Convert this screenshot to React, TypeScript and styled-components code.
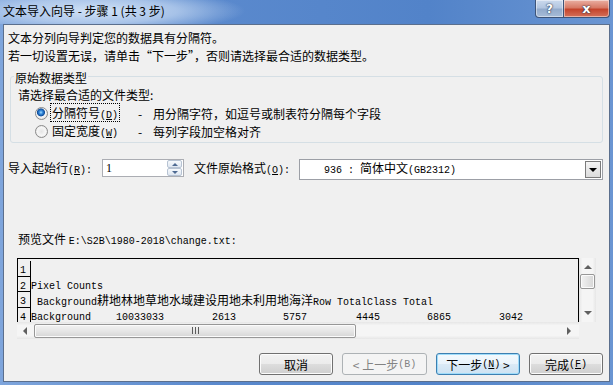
import React from "react";
import styled, { createGlobalStyle, css } from "styled-components";

const GlobalStyle = createGlobalStyle`
  html, body { margin: 0; padding: 0; }
  body {
    width: 613px;
    height: 385px;
    overflow: hidden;
    font-family: "Noto Sans CJK SC", "Liberation Sans", sans-serif;
    font-size: 12px;
    color: #000;
  }
  * { box-sizing: border-box; }
`;

const Window = styled.div`
  width: 613px;
  height: 385px;
  display: flex;
  flex-direction: column;
  background: linear-gradient(90deg, #7ea5dc 0%, #5a89cd 35%, #5283c9 70%, #6a95d2 100%);
  overflow: hidden;
`;

const TitleBar = styled.div`
  height: 24px;
  flex: none;
  display: flex;
  align-items: flex-start;
  justify-content: space-between;
  padding-left: 3px;
  background: radial-gradient(ellipse 150px 22px at 95px 11px, rgba(214, 230, 248, 0.95) 0%, rgba(196, 216, 242, 0.7) 55%, rgba(160, 192, 235, 0) 100%);
`;

const Caption = styled.div`
  line-height: 22px;
  font-size: 12px;
  color: #000;
`;

const CaptionButtons = styled.div`
  display: flex;
  margin-right: 3px;
`;

const CaptionButton = styled.div<{ $kind: "help" | "close" }>`
  height: 18px;
  display: flex;
  align-items: center;
  justify-content: center;
  border: 1px solid #3d5479;
  border-top: none;
  color: #fff;
  font-family: "DejaVu Sans", sans-serif;
  font-weight: bold;
  text-shadow: 0 0 2px #1d2d48, 0 0 1px #1d2d48;
  box-shadow: inset 0 0 0 1px rgba(255, 255, 255, 0.45);
  ${(p) =>
    p.$kind === "help"
      ? css`
          width: 29px;
          font-size: 12px;
          border-radius: 0 0 0 4px;
          background: linear-gradient(180deg, #cbdaee 0%, #b3c6e0 45%, #93abcc 55%, #a7bcd8 100%);
        `
      : css`
          width: 46px;
          font-size: 13px;
          border-left: none;
          border-radius: 0 0 4px 0;
          background: linear-gradient(180deg, #eab0a3 0%, #d77a66 45%, #c4442c 55%, #d4705a 100%);
        `}
`;

const Client = styled.div`
  flex: 1;
  margin: 0 3px 3px 3px;
  border: 1px solid #5b6f8d;
  background: #f0f0f0;
  padding-top: 4px;
  display: flex;
  flex-direction: column;
`;

const Intro = styled.div`
  line-height: 18px;
  padding-left: 4px;
`;

const Key = styled.span`
  font-family: "Liberation Mono", monospace;
  font-size: 10px;
`;

const GroupBox = styled.fieldset`
  margin: 3px 6px 0 6px;
  padding: 0 0 2px 7px;
  border: 1px solid #d5dfe5;
  border-radius: 3px;
  min-width: 0;
`;

const Legend = styled.legend`
  padding: 3px 1px 0;
  margin-left: -4px;
  line-height: 14px;
`;

const Prompt = styled.div`
  margin-top: 2px;
  line-height: 16px;
`;

const RadioList = styled.div`
  margin-top: 1px;
`;

const RadioRow = styled.div`
  height: 18px;
  display: flex;
  align-items: center;
  padding-left: 17px;
`;

const Radio = styled.span<{ $checked?: boolean }>`
  width: 13px;
  height: 13px;
  flex: none;
  border-radius: 50%;
  border: 1px solid #8a8a8a;
  background: radial-gradient(circle at 50% 50%, #e4e4e4 0, #f6f6f6 4px, #d6d6d6 100%);
  ${(p) =>
    p.$checked &&
    css`
      background: radial-gradient(circle at 45% 40%, #a9defc 0, #3a8fe0 1.6px, #0f4e9c 3.6px, #f6f6f6 4.4px, #d6d6d6 100%);
    `}
`;

const RadioLabel = styled.span`
  width: 88px;
  margin-left: 2px;
  flex: none;
`;

const FocusText = styled.span<{ $focused?: boolean }>`
  padding: 0 1px;
  border: 1px dotted ${(p) => (p.$focused ? "#000" : "transparent")};
  line-height: 12px;
`;

const Dash = styled.span`
  display: inline-block;
  width: 15px;
`;

const StartRow = styled.div`
  margin-top: 16px;
  padding-left: 4px;
  display: flex;
  align-items: flex-start;
`;

const FieldLabel = styled.span<{ $width: number; $gap?: number }>`
  width: ${(p) => p.$width}px;
  margin-left: ${(p) => p.$gap ?? 0}px;
  line-height: 18px;
  flex: none;
`;

const Spinner = styled.div`
  width: 82px;
  height: 18px;
  border: 1px solid #abadb3;
  background: #fff;
  display: flex;
  justify-content: space-between;
`;

const SpinValue = styled.span`
  padding-left: 3px;
  font-family: "Liberation Serif", serif;
  font-size: 12px;
  line-height: 16px;
`;

const SpinButtons = styled.div`
  width: 15px;
  display: flex;
  flex-direction: column;
  margin-right: 1px;
`;

const SpinHalf = styled.div<{ $down?: boolean }>`
  flex: 1;
  display: flex;
  align-items: center;
  justify-content: center;
  border: 1px solid #b7c3d3;
  border-radius: 2px;
  background: linear-gradient(180deg, #f6f9fc, #dfe7f1);
  &::after {
    content: "";
    border-left: 3px solid transparent;
    border-right: 3px solid transparent;
    ${(p) => (p.$down ? "border-top: 3px solid #4e6a92;" : "border-bottom: 3px solid #4e6a92;")}
  }
`;

const Combo = styled.div`
  width: 304px;
  height: 21px;
  border: 1px solid #9c9fa6;
  background: #fff;
  display: flex;
  align-items: center;
  justify-content: space-between;
  padding-left: 24px;
`;

const ComboText = styled.span`
  line-height: 18px;
  white-space: pre;
`;

const DropButton = styled.div`
  width: 16px;
  height: 17px;
  margin-right: 1px;
  border: 1px solid #7b7b7b;
  background: linear-gradient(180deg, #f4f4f4, #dcdcdc);
  display: flex;
  align-items: center;
  justify-content: center;
  &::after {
    content: "";
    border-left: 4px solid transparent;
    border-right: 4px solid transparent;
    border-top: 4px solid #000;
  }
`;

const PreviewLabel = styled.div`
  margin-top: 51px;
  padding-left: 14px;
  line-height: 16px;
  white-space: pre;
`;

const Preview = styled.div`
  margin: 8px 0 0 13px;
  display: grid;
  grid-template-columns: 562px 17px;
  grid-template-rows: 64px 17px;
  width: 579px;
`;

const PreviewBody = styled.div`
  border: 1px solid #000;
  border-bottom: none;
  padding-top: 2px;
  overflow: hidden;
  font-family: "Liberation Mono", monospace;
  font-size: 10px;
`;

const Line = styled.div`
  height: 15.5px;
  display: flex;
  line-height: 19px;
  white-space: pre;
`;

const LineNo = styled.span`
  width: 13px;
  flex: none;
  border-right: 1px solid #000;
  border-bottom: 1px solid #000;
  padding-left: 2px;
`;

const Han = styled.span`
  font-family: "Noto Sans CJK SC", sans-serif;
  font-size: 12px;
  line-height: 15px;
`;

const Cell = styled.span<{ $width: number }>`
  width: ${(p) => p.$width}px;
  flex: none;
`;

const VScroll = styled.div`
  display: flex;
  flex-direction: column;
  align-items: center;
  background: linear-gradient(90deg, #e6e6e6, #f5f5f5 20%, #f5f5f5 80%, #e6e6e6);
`;

const HScroll = styled.div`
  display: flex;
  align-items: center;
  background: linear-gradient(180deg, #e6e6e6, #f5f5f5 20%, #f5f5f5 80%, #e6e6e6);
`;

const Arrow = styled.span<{ $dir: "up" | "down" | "left" | "right" }>`
  width: 0;
  height: 0;
  flex: none;
  ${(p) =>
    p.$dir === "up"
      ? css`
          margin-top: 7px;
          border-left: 4px solid transparent;
          border-right: 4px solid transparent;
          border-bottom: 4px solid #606060;
        `
      : p.$dir === "down"
      ? css`
          margin-top: auto;
          margin-bottom: 7px;
          border-left: 4px solid transparent;
          border-right: 4px solid transparent;
          border-top: 4px solid #606060;
        `
      : p.$dir === "left"
      ? css`
          margin-left: 6px;
          border-top: 4px solid transparent;
          border-bottom: 4px solid transparent;
          border-right: 4px solid #606060;
        `
      : css`
          margin-left: auto;
          margin-right: 8px;
          border-top: 4px solid transparent;
          border-bottom: 4px solid transparent;
          border-left: 4px solid #606060;
        `}
`;

const thumbSkin = css`
  border: 1px solid #979797;
  border-radius: 2px;
  box-shadow: inset 0 0 0 1px #fbfbfb;
  display: flex;
  align-items: center;
  justify-content: center;
`;

const VThumb = styled.div`
  ${thumbSkin}
  width: 15px;
  height: 15px;
  margin-top: 5px;
  background: linear-gradient(90deg, #f2f2f2, #e4e4e4 50%, #d6d6d6);
`;

const HThumb = styled.div`
  ${thumbSkin}
  width: 322px;
  height: 14px;
  margin-left: 7px;
  background: linear-gradient(180deg, #f2f2f2, #e6e6e6 50%, #d6d6d6);
`;

const Grip = styled.span`
  width: 7px;
  height: 7px;
  background: repeating-linear-gradient(90deg, #5c5c5c 0 1px, transparent 1px 3px);
`;

const Corner = styled.div`
  background: #f0f0f0;
`;

const ButtonRow = styled.div`
  margin-top: 14px;
  padding-right: 6px;
  display: flex;
  justify-content: flex-end;
  gap: 9px;
`;

const Button = styled.div<{ $width: number; $variant?: "default" | "disabled" }>`
  width: ${(p) => p.$width}px;
  height: 22px;
  border: 1px solid #707070;
  border-radius: 3px;
  display: flex;
  align-items: center;
  justify-content: center;
  white-space: pre;
  box-shadow: inset 0 0 0 1px #fcfcfc;
  background: linear-gradient(180deg, #f2f2f2 0%, #ebebeb 50%, #dddddd 50%, #cfcfcf 100%);
  ${(p) =>
    p.$variant === "default" &&
    css`
      border-color: #3c7fb1;
      box-shadow: inset 0 0 0 1px #9fdcfa;
      background: linear-gradient(180deg, #f3f9fd 0%, #e9f3fb 50%, #dbeaf6 50%, #cde2f2 100%);
    `}
  ${(p) =>
    p.$variant === "disabled" &&
    css`
      border-color: #adb2b5;
      box-shadow: none;
      background: #f4f4f4;
      color: #838383;
    `}
`;

const rows = [
  { text: "Background", width: 85 },
  { text: "10033033", width: 96 },
  { text: "2613", width: 71 },
  { text: "5757", width: 73 },
  { text: "4445", width: 71 },
  { text: "6865", width: 72 },
  { text: "3042", width: 60 },
];

export default function App() {
  return (
    <>
      <GlobalStyle />
      <Window>
        <TitleBar>
          <Caption>文本导入向导 - 步骤 1 (共 3 步)</Caption>
          <CaptionButtons>
            <CaptionButton $kind="help">?</CaptionButton>
            <CaptionButton $kind="close">x</CaptionButton>
          </CaptionButtons>
        </TitleBar>
        <Client>
          <Intro>文本分列向导判定您的数据具有分隔符。</Intro>
          <Intro>若一切设置无误，请单击“下一步”，否则请选择最合适的数据类型。</Intro>
          <GroupBox>
            <Legend>原始数据类型</Legend>
            <Prompt>请选择最合适的文件类型:</Prompt>
            <RadioList>
              <RadioRow>
                <Radio $checked />
                <RadioLabel>
                  <FocusText $focused>
                    分隔符号<Key>(<u>D</u>)</Key>
                  </FocusText>
                </RadioLabel>
                <span>
                  <Dash>-</Dash>用分隔字符，如逗号或制表符分隔每个字段
                </span>
              </RadioRow>
              <RadioRow>
                <Radio />
                <RadioLabel>
                  <FocusText>
                    固定宽度<Key>(<u>W</u>)</Key>
                  </FocusText>
                </RadioLabel>
                <span>
                  <Dash>-</Dash>每列字段加空格对齐
                </span>
              </RadioRow>
            </RadioList>
          </GroupBox>

          <StartRow>
            <FieldLabel $width={94}>
              导入起始行<Key>(<u>R</u>):</Key>
            </FieldLabel>
            <Spinner>
              <SpinValue>1</SpinValue>
              <SpinButtons>
                <SpinHalf />
                <SpinHalf $down />
              </SpinButtons>
            </Spinner>
            <FieldLabel $width={105} $gap={10}>
              文件原始格式<Key>(<u>O</u>):</Key>
            </FieldLabel>
            <Combo>
              <ComboText>
                <Key>936 : </Key>简体中文<Key>(GB2312)</Key>
              </ComboText>
              <DropButton />
            </Combo>
          </StartRow>

          <PreviewLabel>
            预览文件 <Key>E:\S2B\1980-2018\change.txt:</Key>
          </PreviewLabel>

          <Preview>
            <PreviewBody>
              <Line>
                <LineNo>1</LineNo>
              </Line>
              <Line>
                <LineNo>2</LineNo>
                <span>Pixel Counts</span>
              </Line>
              <Line>
                <LineNo>3</LineNo>
                <span>
                  {" Background"}
                  <Han>耕地林地草地水域建设用地未利用地海洋</Han>
                  {"Row TotalClass Total"}
                </span>
              </Line>
              <Line>
                <LineNo>4</LineNo>
                {rows.map((c) => (
                  <Cell key={c.text} $width={c.width}>
                    {c.text}
                  </Cell>
                ))}
              </Line>
            </PreviewBody>
            <VScroll>
              <Arrow $dir="up" />
              <VThumb />
              <Arrow $dir="down" />
            </VScroll>
            <HScroll>
              <Arrow $dir="left" />
              <HThumb>
                <Grip />
              </HThumb>
              <Arrow $dir="right" />
            </HScroll>
            <Corner />
          </Preview>

          <ButtonRow>
            <Button $width={74}>取消</Button>
            <Button $width={85} $variant="disabled">
              {"< 上一步"}
              <Key>(B)</Key>
            </Button>
            <Button $width={84} $variant="default">
              下一步<Key>(<u>N</u>)</Key>
              {" >"}
            </Button>
            <Button $width={74}>
              完成<Key>(<u>F</u>)</Key>
            </Button>
          </ButtonRow>
        </Client>
      </Window>
    </>
  );
}
